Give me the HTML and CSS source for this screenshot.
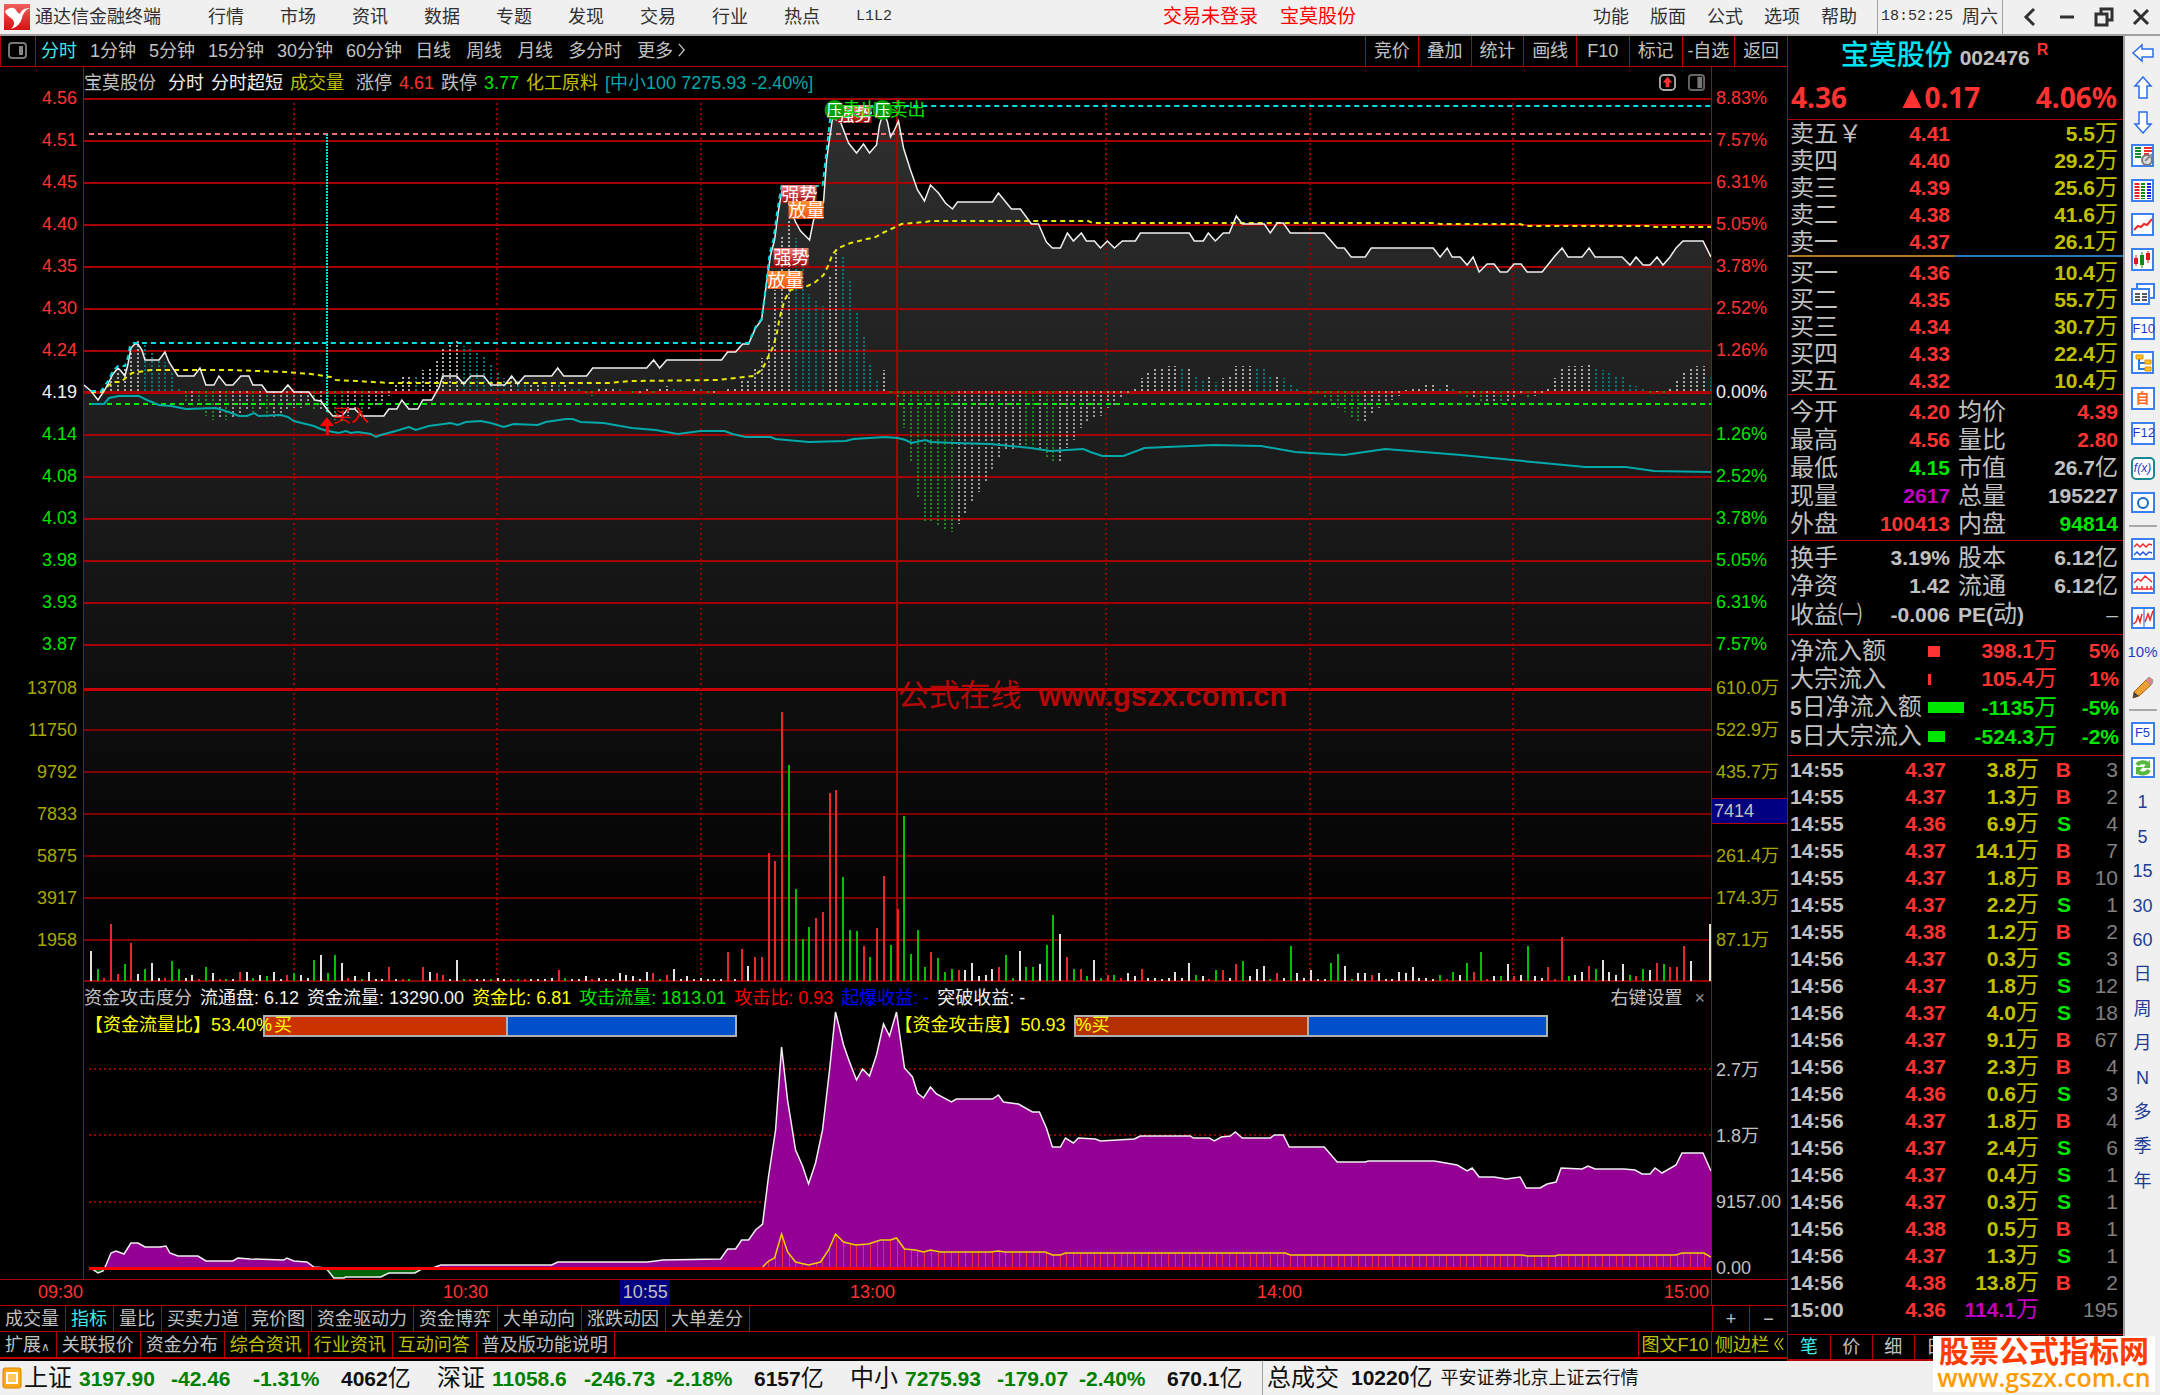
FILE: index.html
```html
<!DOCTYPE html>
<html lang="zh-CN">
<head>
<meta charset="utf-8">
<title>通达信金融终端</title>
<link rel="stylesheet" href="styles.css">
</head>
<body>
<div class="app">
<header class="menubar">
  <svg class="logo" viewBox="0 0 26 26" aria-hidden="true"><defs><linearGradient id="lg" x1="0" y1="0" x2="0" y2="1"><stop offset="0" stop-color="#f0605a"/><stop offset="1" stop-color="#d80f14"/></linearGradient></defs><rect width="26" height="26" fill="url(#lg)"/><path d="M1 7C5 3 11 2 13 8l3 2c1-4 5-6 10-6-5 2-7 6-8 10s-4 9-11 11c3-3 4-6 2-9S2 12 1 7Z" fill="#fff"/></svg>
  <span class="appname">通达信金融终端</span>
  <nav class="menu"><button>行情</button><button>市场</button><button>资讯</button><button>数据</button><button>专题</button><button>发现</button><button>交易</button><button>行业</button><button>热点</button><button class="mono">L1L2</button></nav>
  <div class="login"><a href="#">交易未登录</a><a href="#">宝莫股份</a></div>
  <nav class="tools"><button>功能</button><button>版面</button><button>公式</button><button>选项</button><button>帮助</button></nav>
  <div class="clock"><span class="mono">18:52:25</span><span>周六</span></div>
  <div class="winbtns">
    <button aria-label="收起"><svg viewBox="0 0 20 20"><path d="M14 2 6 10l8 8" stroke-width="3"/></svg></button>
    <button aria-label="最小化"><svg viewBox="0 0 20 20"><path d="M3 10h14" stroke-width="3"/></svg></button>
    <button aria-label="还原"><svg viewBox="0 0 20 20"><path d="M7 6V2h11v11h-4M2 7h11v11H2z" stroke-width="3"/></svg></button>
    <button aria-label="关闭"><svg viewBox="0 0 20 20"><path d="m3 3 14 14M17 3 3 17" stroke-width="3"/></svg></button>
  </div>
</header>

<div class="workspace">
<main class="main">
  <div class="toolbar">
    <button class="pane" aria-label="侧栏"><svg viewBox="0 0 20 18"><rect x="1" y="1" width="17" height="15" rx="3" fill="none" stroke="#777" stroke-width="2"/><path d="M11 4h4v9h-4z" fill="#888"/></svg></button>
    <div class="periods"><button class="on">分时</button><button>1分钟</button><button>5分钟</button><button>15分钟</button><button>30分钟</button><button>60分钟</button></div>
    <div class="periods long"><button>日线</button><button>周线</button><button>月线</button><button>多分时</button><button>更多 <svg class="chev" viewBox="0 0 8 16"><path d="m1 1 6 7-6 7" fill="none" stroke="#c0c0c0" stroke-width="1.5"/></svg></button></div>
    <div class="actions"><button>竞价</button><button>叠加</button><button>统计</button><button>画线</button><button>F10</button><button>标记</button><button>-自选</button><button>返回</button></div>
  </div>

  <div class="charts">
    <ul class="axis left">
      <li>4.56</li><li>4.51</li><li>4.45</li><li>4.40</li><li>4.35</li><li>4.30</li><li>4.24</li><li class="zero">4.19</li><li class="dn">4.14</li><li class="dn">4.08</li><li class="dn">4.03</li><li class="dn">3.98</li><li class="dn">3.93</li><li class="dn">3.87</li>
      <li class="vol first">13708</li><li class="vol">11750</li><li class="vol">9792</li><li class="vol">7833</li><li class="vol">5875</li><li class="vol">3917</li><li class="vol">1958</li>
    </ul>
    <div class="plots">
      <div class="title">
        <span>宝莫股份</span><span class="w gap">分时</span><span class="w">分时超短</span><span class="y">成交量</span><span class="gap">涨停</span><span class="r">4.61</span><span>跌停</span><span class="g">3.77</span><span class="y">化工原料</span><span class="c">[中小100 7275.93 -2.40%]</span>
        <span class="icons">
          <svg viewBox="0 0 18 18"><rect x="1" y="1" width="16" height="16" rx="4" fill="none" stroke="#aaa" stroke-width="2"/><path d="m9 3 5 6h-3v5H7V9H4z" fill="#ff3232"/></svg>
          <svg viewBox="0 0 18 18"><rect x="1" y="1" width="16" height="16" rx="3" fill="none" stroke="#666" stroke-width="2"/><path d="M10 3h5v12h-5z" fill="#777"/></svg>
        </span>
      </div>
      <svg class="price" id="price" role="img" aria-label="分时走势与成交量"></svg>
      <div class="title sub">
        <span>资金攻击度分</span><span class="w">流通盘: 6.12</span><span class="w">资金流量: 13290.00</span><span class="yy">资金比: 6.81</span><span class="gg">攻击流量: 1813.01</span><span class="rr">攻击比: 0.93</span><span class="bb">起爆收益: -</span><span class="w">突破收益: -</span>
        <span class="icons"><button>右键设置</button><button class="x" aria-label="关闭指标">×</button></span>
      </div>
      <svg class="money" id="money" role="img" aria-label="资金攻击度"></svg>
    </div>
    <ul class="axis right">
      <li>8.83%</li><li>7.57%</li><li>6.31%</li><li>5.05%</li><li>3.78%</li><li>2.52%</li><li>1.26%</li><li class="zero">0.00%</li><li class="dn">1.26%</li><li class="dn">2.52%</li><li class="dn">3.78%</li><li class="dn">5.05%</li><li class="dn">6.31%</li><li class="dn">7.57%</li>
      <li class="vol first">610.0万</li><li class="vol">522.9万</li><li class="vol">435.7万</li><li class="cursor"><span>7414</span></li><li class="vol">261.4万</li><li class="vol">174.3万</li><li class="vol">87.1万</li>
      <li class="m head">2.7万</li><li class="m">1.8万</li><li class="m">9157.00</li><li class="m">0.00</li>
    </ul>
  </div>

  <div class="timeaxis">
    <span>09:30</span>
    <div class="hours"><span>10:30</span><span>13:00</span><span>14:00</span><span>15:00</span><span class="now">10:55</span></div>
    <i></i>
  </div>
  <div class="tabs">
    <button>成交量</button><button class="on">指标</button><button>量比</button><button>买卖力道</button><button>竞价图</button><button>资金驱动力</button><button>资金博弈</button><button>大单动向</button><button>涨跌动因</button><button>大单差分</button>
    <div class="ends"><button>+</button><button>−</button></div>
  </div>
  <div class="tabs second">
    <button>扩展<span class="caret">∧</span></button><button>关联报价</button><button>资金分布</button><button class="y">综合资讯</button><button class="y">行业资讯</button><button class="y">互动问答</button><button>普及版功能说明</button>
    <div class="ends text"><button class="y">图文F10</button><button class="y">侧边栏 <svg class="chev2" viewBox="0 0 12 16"><path d="m6 1-5 7 5 7M11 1 6 8l5 7" fill="none" stroke="#c0c000" stroke-width="1.5"/></svg></button></div>
  </div>
</main>

<aside class="quote">
  <div class="stock"><h1>宝莫股份</h1><span class="code">002476</span><sup>R</sup></div>
  <div class="last"><span>4.36</span><span><svg viewBox="0 0 20 20"><path d="M10 0 20 20H0z" fill="#ff3232"/></svg>0.17</span><span>4.06%</span></div>
  <table class="book">
    <tr><th>卖五￥</th><td>4.41</td><td>5.5<u>万</u></td></tr>
    <tr><th>卖四</th><td>4.40</td><td>29.2<u>万</u></td></tr>
    <tr><th>卖三</th><td>4.39</td><td>25.6<u>万</u></td></tr>
    <tr><th>卖二</th><td>4.38</td><td>41.6<u>万</u></td></tr>
    <tr><th>卖一</th><td>4.37</td><td>26.1<u>万</u></td></tr>
  </table>
  <div class="balance"></div>
  <table class="book buy">
    <tr><th>买一</th><td>4.36</td><td>10.4<u>万</u></td></tr>
    <tr><th>买二</th><td>4.35</td><td>55.7<u>万</u></td></tr>
    <tr><th>买三</th><td>4.34</td><td>30.7<u>万</u></td></tr>
    <tr><th>买四</th><td>4.33</td><td>22.4<u>万</u></td></tr>
    <tr><th>买五</th><td>4.32</td><td>10.4<u>万</u></td></tr>
  </table>
  <div class="box"><table class="stats">
    <tr><th>今开</th><td class="r">4.20</td><th>均价</th><td class="r">4.39</td></tr>
    <tr><th>最高</th><td class="r">4.56</td><th>量比</th><td class="r">2.80</td></tr>
    <tr><th>最低</th><td class="g">4.15</td><th>市值</th><td>26.7<u>亿</u></td></tr>
    <tr><th>现量</th><td class="p">2617</td><th>总量</th><td>195227</td></tr>
    <tr><th>外盘</th><td class="r">100413</td><th>内盘</th><td class="g">94814</td></tr>
  </table></div>
  <div class="box mid"><table class="stats">
    <tr><th>换手</th><td>3.19%</td><th>股本</th><td>6.12<u>亿</u></td></tr>
    <tr><th>净资</th><td>1.42</td><th>流通</th><td>6.12<u>亿</u></td></tr>
    <tr><th>收益㈠</th><td>-0.006</td><th><b>PE(</b>动<b>)</b></th><td class="dash">–</td></tr>
  </table></div>
  <div class="box flows"><table class="flow">
    <tr><th>净流入额</th><td><i style="width:12px"></i></td><td>398.1<u>万</u></td><td>5%</td></tr>
    <tr><th>大宗流入</th><td><i style="width:3px"></i></td><td>105.4<u>万</u></td><td>1%</td></tr>
    <tr class="out"><th><b>5</b>日净流入额</th><td><i style="width:36px"></i></td><td>-1135<u>万</u></td><td>-5%</td></tr>
    <tr class="out"><th><b>5</b>日大宗流入</th><td><i style="width:17px"></i></td><td>-524.3<u>万</u></td><td>-2%</td></tr>
  </table></div>
  <div class="box deals"><table class="ticks">
    <tr><td>14:55</td><td>4.37</td><td>3.8<u>万</u></td><td>B</td><td>3</td></tr>
    <tr><td>14:55</td><td>4.37</td><td>1.3<u>万</u></td><td>B</td><td>2</td></tr>
    <tr><td>14:55</td><td>4.36</td><td>6.9<u>万</u></td><td class="s">S</td><td>4</td></tr>
    <tr><td>14:55</td><td>4.37</td><td>14.1<u>万</u></td><td>B</td><td>7</td></tr>
    <tr><td>14:55</td><td>4.37</td><td>1.8<u>万</u></td><td>B</td><td>10</td></tr>
    <tr><td>14:55</td><td>4.37</td><td>2.2<u>万</u></td><td class="s">S</td><td>1</td></tr>
    <tr><td>14:55</td><td>4.38</td><td>1.2<u>万</u></td><td>B</td><td>2</td></tr>
    <tr><td>14:56</td><td>4.37</td><td>0.3<u>万</u></td><td class="s">S</td><td>3</td></tr>
    <tr><td>14:56</td><td>4.37</td><td>1.8<u>万</u></td><td class="s">S</td><td>12</td></tr>
    <tr><td>14:56</td><td>4.37</td><td>4.0<u>万</u></td><td class="s">S</td><td>18</td></tr>
    <tr><td>14:56</td><td>4.37</td><td>9.1<u>万</u></td><td>B</td><td>67</td></tr>
    <tr><td>14:56</td><td>4.37</td><td>2.3<u>万</u></td><td>B</td><td>4</td></tr>
    <tr><td>14:56</td><td>4.36</td><td>0.6<u>万</u></td><td class="s">S</td><td>3</td></tr>
    <tr><td>14:56</td><td>4.37</td><td>1.8<u>万</u></td><td>B</td><td>4</td></tr>
    <tr><td>14:56</td><td>4.37</td><td>2.4<u>万</u></td><td class="s">S</td><td>6</td></tr>
    <tr><td>14:56</td><td>4.37</td><td>0.4<u>万</u></td><td class="s">S</td><td>1</td></tr>
    <tr><td>14:56</td><td>4.37</td><td>0.3<u>万</u></td><td class="s">S</td><td>1</td></tr>
    <tr><td>14:56</td><td>4.38</td><td>0.5<u>万</u></td><td>B</td><td>1</td></tr>
    <tr><td>14:56</td><td>4.37</td><td>1.3<u>万</u></td><td class="s">S</td><td>1</td></tr>
    <tr><td>14:56</td><td>4.38</td><td>13.8<u>万</u></td><td>B</td><td>2</td></tr>
    <tr class="close"><td>15:00</td><td>4.36</td><td>114.1<u>万</u></td><td></td><td>195</td></tr>
  </table></div>
  <nav class="qtabs"><button class="on">笔</button><button>价</button><button>细</button><button>日</button><button></button><button></button><button></button><button></button></nav>
</aside>

<nav class="rail">
  <div class="railitems">
  <button aria-label="后退"><svg viewBox="0 0 24 24"><path d="M2 12 11 4v4h11v8H11v4z" class="arrow"/></svg></button>
  <button aria-label="上"><svg viewBox="0 0 24 24"><path d="m12 1 8 9h-4v12H8V10H4z" class="arrow"/></svg></button>
  <button aria-label="下"><svg viewBox="0 0 24 24"><path d="m12 23 8-9h-4V2H8v12H4z" class="arrow"/></svg></button>
  <button aria-label="行情设置"><svg viewBox="0 0 24 24"><path d="M1 1h21v21H1z" class="fr"/><path d="M4 4h6M4 7h6M4 10h6M4 13h6" stroke="#0a8a2a" stroke-width="2"/><path d="M13 4h8M13 7h8M13 10h5" stroke="#f02828" stroke-width="2"/><circle cx="16" cy="16" r="5" fill="#ddd" stroke="#777" stroke-width="2"/><path d="m14 17 7-7" stroke="#888" stroke-width="2"/></svg></button>
  <button aria-label="报价"><svg viewBox="0 0 24 24"><path d="M1 1h21v21H1z" class="fr"/><path d="M6 4v16" stroke="#f02020" stroke-width="5" stroke-dasharray="2 1"/><path d="M12 4v16" stroke="#118a11" stroke-width="4" stroke-dasharray="2 1"/><path d="M18 4v16" stroke="#2020e0" stroke-width="4" stroke-dasharray="2 1"/></svg></button>
  <button aria-label="分时图"><svg viewBox="0 0 24 24"><path d="M1 1h21v21H1z" class="fr"/><path d="m3 17 4-4 3 1 3-3 3 1 5-6" class="rd"/></svg></button>
  <button aria-label="K线"><svg viewBox="0 0 24 24"><path d="M1 1h21v21H1z" class="fr"/><path d="M5 7v11M17 3v12" stroke="#e01818"/><path d="M3 10h4v6H3zM15 5h4v7h-4z" fill="#e01818"/><path d="M11 4v16" stroke="#118a11"/><path d="M9 7h4v10H9z" fill="#118a11"/></svg></button>
  <button aria-label="窗口"><svg viewBox="0 0 24 24"><path d="M6 2h17v14H6z" class="fr"/><path d="M1 7h17v15H1z" class="fr"/><path d="M4 12h5M11 12h5M4 15h5M11 15h5M4 18h5M11 18h5" stroke="#555" stroke-width="2"/></svg></button>
  <button class="key">F10</button>
  <button aria-label="树"><svg viewBox="0 0 24 24"><path d="M1 1h21v21H1z" class="fr"/><path d="M8 7v11h6M8 12h6" stroke="#2a7ae0" stroke-width="2" fill="none"/><path d="M5 4h7v4H5zM14 9h6v4h-6zM14 16h6v4h-6z" fill="#ffc020" stroke="#e09000"/></svg></button>
  <button class="key self">自</button>
  <button class="key">F12</button>
  <button class="key fx">f(x)</button>
  <button aria-label="圆"><svg viewBox="0 0 24 24"><path d="M1 2h22v19H1z" class="fr"/><circle cx="12" cy="12" r="5" fill="none" stroke="#1468c8" stroke-width="2"/></svg></button>
  <hr>
  <button aria-label="双线"><svg viewBox="0 0 24 24"><path d="M1 2h22v20H1z" class="fr"/><path d="m3 10 3-3 3 3 3-3 3 3 3-3 3 1" fill="none" stroke="#f02828" stroke-width="1.5"/><path d="m3 18 3-3 3 3 3-3 3 3 3-3 3 1" fill="none" stroke="#2a50e0" stroke-width="1.5"/></svg></button>
  <button aria-label="区间"><svg viewBox="0 0 24 24"><path d="M1 2h22v20H1z" class="fr"/><path d="m3 12 4-4 3 2 4-5 7 6M2 18h20M6 18v-3M11 18v-3M16 18v-3M20 18v-3" fill="none" stroke="#f02828" stroke-width="1.5"/></svg></button>
  <button aria-label="波动"><svg viewBox="0 0 24 24"><path d="M1 2h22v20H1z" class="fr"/><path d="m2 18 3-2 2-6 2 6 2-8M14 16l3-8 2 6 3-9" fill="none" stroke="#f02828" stroke-width="1.5"/><path d="M13 3v18" stroke="#2a50e0"/></svg></button>
  <button class="pct">10%</button>
  <button aria-label="画笔"><svg viewBox="0 0 24 24"><path d="m3 17 13-13 5 5L8 21l-6 2z" fill="#f0a030" stroke="#a86010"/><path d="m15 5 3-3 4 3-1 4-2 1z" fill="#e88080" stroke="#999"/><path d="m3 17 5 4-6 2z" fill="#444"/></svg></button>
  <hr>
  <button class="key">F5</button>
  <button aria-label="刷新"><svg viewBox="0 0 24 24"><path d="M1 2h22v19H1z" class="fr"/><path d="M6 9a7 6 0 0 1 11-1M18 14a7 6 0 0 1-11 2" fill="none" stroke="#58b840" stroke-width="4"/><path d="M19 4v8h-7zM5 19v-8h7z" fill="#58b840"/></svg></button>
  <button>1</button><button>5</button><button>15</button><button>30</button><button>60</button><button>日</button><button>周</button><button>月</button><button>N</button><button>多</button><button>季</button><button>年</button>
  </div>
</nav>
</div>

<footer class="status">
  <svg class="sicon" viewBox="0 0 20 22"><rect x="1" y="1" width="18" height="20" rx="2" fill="#ffa818" stroke="#d88000"/><rect x="5" y="6" width="10" height="10" fill="#ffc860" stroke="#fff" stroke-width="2"/></svg>
  <div class="index"><span>上证</span><b>3197.90</b><b>-42.46</b><b>-1.31%</b><strong>4062<u>亿</u></strong></div>
  <div class="index"><span>深证</span><b>11058.6</b><b>-246.73</b><b>-2.18%</b><strong>6157<u>亿</u></strong></div>
  <div class="index"><span>中小</span><b>7275.93</b><b>-179.07</b><b>-2.40%</b><strong>670.1<u>亿</u></strong></div>
  <div class="total"><span>总成交</span><strong>10220<u>亿</u></strong></div>
  <div class="server">平安证券北京上证云行情</div>
</footer>
<a class="site" href="#"><strong>股票公式指标网</strong><span>www.gszx.com.cn</span></a>
</div>
<script src="chart.js"></script>
</body>
</html>
```
FILE: styles.css
```css
* { box-sizing: border-box; }
body { margin: 0; background: #000; color: #c0c0c0; font: 18px/24px "Liberation Sans", "Noto Sans CJK SC", sans-serif; }
button { margin: 0; padding: 0; border: 0; background: none; color: inherit; font: inherit; white-space: nowrap; cursor: pointer; }
a { color: inherit; text-decoration: none; }
ul { margin: 0; padding: 0; list-style: none; }
u { text-decoration: none; font-weight: 400; font-size: 23px; line-height: 1; }
table { width: 100%; border-collapse: collapse; table-layout: fixed; }
th, td { padding: 0; white-space: nowrap; }
.app { position: relative; min-width: 1500px; }
.mono { font-family: "Liberation Mono", monospace; font-size: 15px; }
.r { color: #ff3232; }
.g { color: #00e600; }
.y { color: #c0c000; }
.c { color: #00a8a8; }
.w { color: #f0f0f0; }
.p { color: #c000c0; }
.yy { color: #ffff00; }
.gg { color: #00e600; }
.rr { color: #ff0000; }
.bb { color: #0000ff; }

/* menu bar */
.menubar { display: flex; align-items: center; height: 36px; padding-left: 4px; background: #f0f0f0; color: #303030; border-bottom: 2px solid #a0a0a0; }
.logo { width: 26px; height: 26px; }
.appname { margin-left: 5px; }
.menu { display: flex; gap: 36px; margin-left: 47px; }
.login { flex: 1; display: flex; justify-content: center; gap: 22px; color: #ff0000; font-size: 19px; padding-left: 34px; }
.tools { display: flex; gap: 21px; margin-right: 20px; }
.clock { display: flex; align-items: center; gap: 9px; height: 34px; padding: 0 4px 0 3px; border-left: 1px solid #a0a0a0; border-right: 1px solid #a0a0a0; }
.winbtns { display: flex; gap: 17px; margin: 0 9px 0 17px; }
.winbtns svg { display: block; width: 20px; height: 20px; fill: none; stroke: #303030; }

.workspace { display: grid; grid-template-columns: 1fr 336px 37px; }
.main { min-width: 0; }

/* period toolbar */
.toolbar { display: flex; align-items: stretch; height: 31px; border-bottom: 1px solid #b40000; }
.pane { width: 36px; border-left: 1px solid #b40000; border-right: 1px solid #b40000; display: grid; place-items: center; }
.pane svg { width: 20px; height: 18px; }
.periods { display: flex; gap: 13px; margin-left: 5px; }
.long { gap: 15px; margin-left: 13px; }
.on { color: #40e8e8; }
.chev { width: 7px; height: 14px; }
.chev2 { width: 10px; height: 14px; }
.actions { display: grid; grid-template-columns: repeat(8, 1fr); width: 422px; margin-left: auto; }
.actions button { border-left: 1px solid #b40000; }

/* charts */
.charts { display: grid; grid-template-columns: 83px 1fr 76px; }
.axis { padding-top: 10px; color: #ff3232; }
.axis li { height: 42px; display: flex; align-items: center; }
.axis .zero { color: #f0f0f0; }
.axis .dn { color: #00e600; }
.axis .vol { color: #a8a800; }
.axis .first { margin-top: 2px; }
.left li { justify-content: flex-end; padding-right: 6px; }
.right { border-left: 1px solid #b40000; }
.right li { padding-left: 4px; }
.right .cursor { padding: 0 0 6px; }
.cursor span { flex: 1; height: 26px; padding-left: 2px; background: #000080; border: solid #b40000; border-width: 1px 0; color: #c0c0c0; }
.right .m { align-items: flex-end; height: 66px; color: #c0c0c0; line-height: 20px; }
.right .head { margin-top: 53px; }
.plots { min-width: 0; border-left: 1px solid #b40000; }
.title { display: flex; align-items: center; gap: 7px; height: 31px; overflow: hidden; white-space: nowrap; }
.title .gap { margin-left: 5px; }
.title.sub { gap: 8px; height: 28px; padding-top: 3px; }
.icons { display: flex; gap: 12px; margin-left: auto; margin-right: 6px; }
.icons svg { width: 17px; height: 17px; }
.x { color: #909090; }
.price { display: block; width: 100%; height: 884px; }
.money { display: block; width: 100%; height: 269px; }

/* time axis and tab rows */
.timeaxis { display: grid; grid-template-columns: 83px 1fr 76px; height: 27px; border: solid #b40000; border-width: 1px 0; color: #ff3232; text-align: right; }
.timeaxis i { border-left: 1px solid #b40000; }
.hours { position: relative; display: grid; grid-template-columns: repeat(4, 1fr); }
.hours span { padding-right: 2px; }
.hours .now { position: absolute; left: 33%; top: 0; bottom: 0; width: 50px; padding: 0; background: #000080; color: #c0c0c0; text-align: center; }
.tabs { display: flex; height: 26px; border-bottom: 1px solid #b40000; }
.tabs.second { height: 27px; border-bottom: 2px solid #c00000; }
.tabs > button { padding: 0 6px 0 5px; border-right: 1px solid #b40000; }
.caret { font: 12px/12px "DejaVu Sans", sans-serif; }
.ends { display: grid; grid-template-columns: 37px 38px; margin-left: auto; }
.ends button { border-left: 1px solid #b40000; }
.ends.text { grid-template-columns: 73px 76px; }

/* quote panel */
.quote { border-left: 1px solid #b40000; }
.stock { display: flex; justify-content: center; align-items: baseline; gap: 7px; height: 40px; padding-right: 22px; }
.stock h1 { margin: 0; color: #00e4f4; font-size: 28px; line-height: 40px; font-weight: 500; }
.code { font-size: 21px; font-weight: 700; }
.stock sup { align-self: flex-start; color: #ff3232; font-size: 16px; font-weight: 700; line-height: 28px; }
.last { display: flex; justify-content: space-between; height: 44px; padding: 0 6px 0 3px; border-bottom: 1px solid #b40000; color: #ff3232; font: 700 28px/42px "Noto Sans", sans-serif; }
.last svg { width: 20px; height: 19px; margin-right: 2px; }
th { color: #c0c0c0; font-size: 24px; font-weight: 400; text-align: left; }
th b { font-size: 21px; }
td { font-size: 21px; font-weight: 700; text-align: right; }
.book td, .book th { height: 27px; line-height: 27px; }
.book { color: #c0c000; }
.book th { width: 100px; padding-left: 2px; }
.book td:nth-child(2) { width: 62px; color: #ff3232; }
.book td:last-child { padding-right: 5px; }
.balance { height: 2px; margin: 0 0 2px; background: linear-gradient(90deg, #b07820 50%, #2878b8 50%); }
.box { padding: 3px 0 2px; border-top: 1px solid #b40000; }
.mid { padding-bottom: 5px; }
.flows { padding: 2px 0 4px; }
.deals { padding: 0 0 11px; }
.stats td, .stats th, .flow td, .flow th { height: 28px; line-height: 28px; }
.stats th { width: 75px; padding-left: 2px; }
.stats td:nth-child(2) { width: 87px; }
.stats th:nth-child(3) { width: 70px; padding-left: 8px; }
.stats td:last-child { padding-right: 5px; }
.stats .dash { padding-right: 20px; font-weight: 400; }
.flow { color: #ff3232; }
.flow .out { color: #00e600; }
.flow th { width: 140px; padding-left: 2px; }
.flow td:nth-child(2) { width: 38px; }
.flow td:nth-child(3) { width: 91px; }
.flow td:last-child { padding-right: 4px; }
.flow i { display: block; height: 11px; background: currentColor; }
.ticks td { height: 27px; line-height: 27px; }
.ticks td:nth-child(1) { width: 70px; padding-left: 2px; text-align: left; }
.ticks td:nth-child(2) { width: 88px; color: #ff3232; }
.ticks td:nth-child(3) { width: 93px; color: #c0c000; }
.ticks td:nth-child(4) { width: 32px; color: #ff3232; }
.ticks .s:nth-child(4) { color: #00e600; }
.ticks td:nth-child(5) { padding-right: 5px; color: #808080; font-weight: 400; }
.ticks .close td:nth-child(3) { color: #c000c0; }
.qtabs { display: grid; grid-template-columns: repeat(8, 1fr); height: 27px; border: solid #b40000; border-width: 1px 0 2px; }
.qtabs button + button { border-left: 1px solid #b40000; }

/* icon rail */
.rail { background: #f0f0f0; border-left: 2px solid #a0a0a0; color: #1c3c94; }
.railitems { display: flex; flex-direction: column; height: 1162px; }
.rail button { flex: 1; display: grid; place-items: center; }
.rail svg { width: 24px; height: 24px; }
.rail hr { width: 28px; height: 2px; margin: 5px auto; border: 0; background: #a8a8a8; }
.arrow { fill: #fff; stroke: #2a6ce8; stroke-width: 1.5; }
.fr { fill: #fff; stroke: #3a80f0; stroke-width: 2; }
.rd { fill: none; stroke: #f02828; stroke-width: 2; }
.rail .key { flex: 0 1 23px; width: 24px; margin: 6px auto; border: 2px solid #3a80f0; background: #fff; color: #1c3cc8; font-size: 13px; line-height: 18px; }
.rail .self { color: #ff6a1a; font-weight: 700; font-size: 14px; }
.rail .fx { border-color: #1a8890; border-radius: 5px; font-size: 12px; font-style: italic; }
.rail .pct { color: #1c3cc8; font-size: 15px; }

/* status bar */
.status { display: flex; height: 36px; align-items: center; padding-left: 2px; background: #f0f0f0; color: #101010; border-bottom: 2px solid #203040; font-size: 24px; line-height: 34px; white-space: nowrap; }
.sicon { width: 20px; height: 22px; margin-right: 2px; }
.index { display: grid; grid-template-columns: 55px 92px 82px 88px 96px; align-items: baseline; }
.status b, .status strong { font-size: 21px; }
.status b { color: #008000; }
.total { display: flex; gap: 12px; margin-left: -1px; padding-left: 4px; border-left: 1px solid #a0a0a0; }
.server { padding-left: 8px; font-size: 18px; }
.site { position: absolute; right: 5px; bottom: 5px; width: 222px; height: 56px; background: #fff; text-align: center; }
.site strong { display: block; color: #ff3c00; font-size: 30px; line-height: 32px; font-weight: 700; }
.site span { display: block; color: #ff9c00; font: 600 25px/18px "Open Sans", sans-serif; }
```
FILE: chart.js
```js
// Both plots share one time scale: 240 minutes drawn from LEFT to RIGHT.
const LEFT = 83, RIGHT = 1711, STEP = (RIGHT - LEFT) / 240;
const NS = 'http://www.w3.org/2000/svg';

const pricePts = '83,385 90,391 97,400 103,391 107,384 112,374 117,368 120,371 124,376 127,364 130,348 134,344 137,344 141,350 144,360 158,360 164,352 168,362 177,376 193,376 199,368 205,385 213,385 218,376 225,385 232,385 240,376 248,376 252,385 261,385 266,392 281,392 287,385 293,392 308,392 314,400 320,401 326,409 332,416 341,416 347,409 354,409 361,416 383,416 388,409 396,409 401,400 408,409 417,409 422,400 431,400 438,388 442,376 456,376 463,384 470,376 483,376 490,385 504,385 511,376 517,384 524,376 551,376 557,368 563,376 586,376 592,368 646,368 653,360 659,368 666,360 721,360 727,352 735,352 742,344 748,344 755,328 761,320 765,290 770,255 774,240 778,210 782,187 787,200 795,222 800,231 809,240 813,220 823,202 826,160 832,118 840,122 843,130 848,143 856,153 863,144 869,153 876,145 879,125 883,112 887,122 890,137 894,130 898,121 903,148 910,170 917,190 921,196 924,201 930,185 938,193 945,203 952,209 957,202 992,202 998,193 1011,209 1020,209 1031,224 1038,224 1046,242 1052,248 1060,248 1067,233 1073,241 1081,233 1086,241 1094,241 1100,248 1107,241 1114,248 1122,241 1135,241 1140,233 1189,233 1194,241 1203,241 1208,233 1215,241 1223,233 1229,233 1236,216 1242,224 1264,224 1270,233 1277,223 1283,223 1290,233 1324,233 1337,248 1344,248 1351,257 1365,257 1371,248 1433,248 1440,257 1447,248 1452,257 1460,257 1467,265 1473,257 1479,272 1487,264 1494,264 1500,272 1507,272 1514,264 1521,264 1527,272 1542,272 1554,257 1562,248 1568,257 1582,257 1589,248 1595,257 1622,257 1630,265 1636,257 1643,265 1650,265 1657,257 1663,265 1670,257 1676,248 1683,241 1703,241 1711,257';
const avgPts = '90,392 100,392 108,385 113,382 120,382 127,376 131,373 150,370 230,370 285,372 310,374 330,377 335,380 355,381 390,383 608,383 631,381 717,380 753,376 762,369 766,360 772,348 776,335 779,318 784,300 790,290 807,286 815,282 823,275 828,265 832,254 838,248 850,243 875,237 882,233 895,227 901,224 925,222 930,221 1088,221 1092,223 1434,223 1440,224 1520,224 1526,226 1650,226 1655,227 1711,227';
const indexPts = '90,404 103,404 108,398 118,396 138,396 146,400 158,405 170,406 185,409 215,408 228,412 238,416 246,416 253,413 258,416 280,415 287,417 293,421 305,424 313,426 320,429 327,431 338,433 345,431 350,433 357,432 370,434 375,437 380,435 395,431 408,427 415,430 428,426 450,423 457,425 465,422 480,421 490,423 503,427 513,424 537,425 545,422 565,419 572,419 580,422 603,423 631,428 655,430 677,434 700,431 724,431 732,434 745,437 770,437 775,439 808,442 845,441 853,439 885,437 897,438 905,440 911,443 925,440 930,442 955,443 990,444 1010,446 1030,448 1050,451 1083,449 1090,452 1102,456 1123,456 1144,448 1213,445 1261,446 1295,452 1344,455 1385,449 1461,455 1543,463 1585,467 1626,467 1654,471 1711,472';
const highPts = '90,391 100,391 107,381 112,371 117,366 124,366 127,357 129,346 133,343 748,343 755,327 761,319 765,289 769,254 773,239 777,209 781,186 822,186 825,160 831,106 1711,106';
const moneyPts = '90,1268 97,1273 102,1271 105,1265 110,1253 115,1251 123,1254 130,1243 137,1243 144,1247 159,1247 165,1246 169,1253 177,1256 197,1256 205,1261 232,1261 237,1258 249,1259 283,1260 286,1258 293,1261 306,1262 313,1267 325,1268 333,1278 343,1278 345,1277 380,1277 388,1273 414,1273 421,1269 432,1268 440,1265 551,1265 557,1262 647,1262 655,1261 662,1260 720,1259 727,1249 735,1249 741,1240 748,1240 755,1230 762,1224 768,1176 775,1130 781,1047 787,1100 795,1150 802,1166 808,1184 815,1163 822,1130 829,1070 835,1012 843,1045 849,1062 856,1080 862,1069 869,1076 876,1055 883,1024 889,1036 896,1012 904,1068 912,1077 917,1093 923,1098 930,1087 936,1094 951,1102 956,1099 992,1099 998,1095 1003,1102 1018,1104 1032,1112 1039,1112 1046,1128 1052,1147 1060,1147 1065,1138 1073,1143 1078,1138 1095,1139 1100,1141 1134,1139 1140,1136 1190,1136 1193,1138 1209,1138 1214,1141 1221,1137 1230,1136 1235,1132 1242,1138 1270,1138 1274,1135 1283,1135 1289,1147 1324,1147 1337,1162 1365,1162 1368,1161 1434,1161 1457,1165 1467,1171 1472,1168 1479,1177 1494,1177 1506,1179 1520,1177 1526,1188 1540,1188 1547,1184 1556,1182 1561,1168 1582,1169 1588,1166 1595,1169 1624,1169 1635,1170 1642,1174 1650,1174 1655,1168 1662,1173 1676,1165 1682,1153 1703,1153 1711,1171';
const forcePts = '762,1267 768,1261 774,1258 781,1234 787,1252 795,1262 808,1265 820,1262 828,1250 835,1234 843,1242 855,1245 868,1244 880,1240 890,1240 896,1238 904,1249 915,1250 923,1252 930,1250 940,1252 990,1252 998,1251 1004,1252 1045,1252 1052,1255 1060,1255 1065,1253 1285,1253 1290,1255 1522,1255 1527,1256 1555,1256 1558,1255 1676,1255 1682,1253 1704,1253 1711,1257';

// Momentum histogram, minute 4 onwards; positive values rise above the zero line.
const momentum = [13,19,23,39,51,46,39,30,29,18,3,-11,-11,-13,-25,-29,-26,-29,-27,-25,-19,-21,-20,-26,-26,-25,-19,-17,-17,-13,-18,-18,-23,-29,-31,-25,-19,-21,-19,-14,-13,-5,6,14,16,15,21,23,30,42,48,51,45,43,40,36,27,19,13,13,11,7,8,8,5,7,6,8,4,2,-2,-5,2,4,4,3,0,-3,-2,2,-3,3,5,4,1,0,3,2,-3,-2,0,2,3,10,12,24,33,67,101,155,171,153,126,97,91,85,114,144,135,110,78,55,28,12,21,-2,-8,-37,-72,-106,-130,-132,-136,-139,-141,-133,-123,-112,-101,-91,-80,-67,-59,-58,-55,-57,-59,-59,-66,-71,-71,-57,-49,-37,-31,-27,-25,-17,-15,-8,-2,4,13,19,22,24,25,25,24,24,16,12,15,9,13,15,25,25,25,24,22,15,15,13,8,3,-1,-2,-3,-7,-12,-17,-21,-26,-31,-31,-24,-17,-12,-9,-5,1,3,4,6,7,3,6,2,-2,-7,-6,-12,-11,-11,-13,-12,-7,-2,-6,-5,-3,4,13,24,25,25,25,28,24,21,18,15,14,7,5,2,-2,-1,-2,3,10,19,24,25,25,13];

// Volume per minute: colour letter and bar height.
const volume = 'w30 g12 r3 r57 r7 g17 r38 w7 g12 w18 w3 r3 g20 g12 w3 w6 r2 g14 w8 r2 g2 w2 r9 w9 g3 w6 g5 w9 w2 r6 g8 w6 w3 g21 w26 g8 g26 w18 r3 w5 g2 w9 w2 w2 r14 w2 r2 g2 w0 r14 w9 r8 r6 w2 w21 g2 r2 w2 w2 g2 w3 w2 r2 g2 r2 w2 w2 w2 w3 r11 g3 w2 w2 w5 r2 w3 w2 w2 w8 w6 w5 w2 w9 r8 g2 r6 w12 w2 w5 w2 w3 w2 w2 w2 r29 w2 r32 w15 r24 r24 r128 r120 r269 g216 g92 g42 g54 r63 r69 r188 r191 g104 g51 g50 r35 g24 r53 r105 g36 r72 g165 g27 g51 g14 r29 g23 g9 g12 r11 w11 w18 w5 w6 w12 r14 g26 g3 w30 g14 g14 w17 g36 g66 w47 r24 g12 r12 g5 w21 g3 r6 g6 r3 w8 w5 r12 w3 w3 w2 w3 w9 w3 w18 g6 w5 r2 g11 r11 w3 r17 g20 w5 w12 w15 g2 r8 w3 g35 w8 w3 w11 w2 w2 g18 g27 w15 g2 w8 w8 r6 w8 w2 w2 w9 w8 w14 w3 w3 w2 g6 r2 g9 w6 g18 r9 g29 r2 w5 g5 w17 r5 w6 g35 w5 w3 r14 r2 r44 g5 w6 w9 r15 g12 w21 w9 w6 w17 g6 r5 g12 w11 r18 g17 r14 r14 r35 w20 w0 w0 w57'.split(' ');
const VOL = { w: '#e0e0e0', g: '#00c000', r: '#e62828' };

function setup(id, top, height) {
  const svg = document.getElementById(id);
  const width = svg.clientWidth;
  const k = width / (RIGHT - LEFT);
  svg.setAttribute('viewBox', `${LEFT} ${top} ${width} ${height}`);
  svg.textContent = '';
  const X = x => LEFT + (x - LEFT) * k;
  const add = (tag, attrs, text) => {
    const el = document.createElementNS(NS, tag);
    for (const a in attrs) el.setAttribute(a, attrs[a]);
    if (text) el.textContent = text;
    svg.appendChild(el);
    return el;
  };
  const map = s => s.split(' ').map(p => { const [x, y] = p.split(',').map(Number); return `${X(x)},${y}`; }).join(' ');
  return {
    X, add, map,
    line: (x1, y1, x2, y2, stroke, w = 2, dash = 'none') => add('line', { x1: X(x1), y1, x2: X(x2), y2, stroke, 'stroke-width': w, 'stroke-dasharray': dash, 'shape-rendering': 'crispEdges' }),
    poly: (pts, stroke, w = 1.5, dash = 'none') => add('polyline', { points: map(pts), fill: 'none', stroke, 'stroke-width': w, 'stroke-dasharray': dash }),
    text: (x, y, s, fill, size = 18, weight = 400) => add('text', { x: X(x), y, fill, 'font-size': size, 'font-weight': weight, style: 'white-space:pre' }, s)
  };
}

function gradient(add, id, from, to) {
  const g = add('linearGradient', { id, x1: 0, y1: 0, x2: 0, y2: 1 });
  g.innerHTML = `<stop offset="0" stop-color="${from}"/><stop offset="1" stop-color="${to}"/>`;
}

function drawPrice() {
  const { X, add, map, line, poly, text } = setup('price', 98, 884);
  const fill = add('linearGradient', { id: 'shade', gradientUnits: 'userSpaceOnUse', x1: 0, y1: 98, x2: 0, y2: 960 });
  fill.innerHTML = '<stop offset="0" stop-color="#303030"/><stop offset="1" stop-color="#000"/>';
  gradient(add, 'hot', '#f08080', '#a00808');
  gradient(add, 'warm', '#ff9030', '#f05018');
  add('polygon', { points: `${X(83)},982 ${map(pricePts)} ${X(1711)},982`, fill: 'url(#shade)' });

  for (let i = 0; i < 14; i++) line(83, 99 + i * 42, 1711, 99 + i * 42, '#a40000');
  for (let i = 0; i < 6; i++) line(83, 730 + i * 42, 1711, 730 + i * 42, '#800000');
  line(83, 392, 1711, 392, '#b00000', 3);
  line(83, 689, 1711, 689, '#c80000', 3);
  line(83, 981, 1711, 981, '#900000');
  [293, 496, 700, 1106, 1310, 1513].forEach(x => line(x, 103, x, 981, '#900000', 2, '2 3'));
  line(896, 98, 896, 981, '#a40000');

  momentum.forEach((v, n) => {
    if (!v) return;
    const prev = n ? momentum[n - 1] : 0;
    const colour = v > 0 ? (v < prev ? '#007878' : '#a8a8a8') : (v < prev ? '#208820' : '#989898');
    const x = LEFT + (n + 4) * STEP;
    line(x, 391, x, 391 - v, colour, 2, '2 2');
  });

  line(88, 134, 1711, 134, '#f07070', 2, '5 4');
  line(88, 404, 1711, 404, '#00f000', 2, '5 4');
  line(326, 134, 326, 412, '#00e0e0', 2, '2 1');
  poly(indexPts, '#00a8a8', 2);
  poly(avgPts, '#e8e800', 2, '5 4');
  poly(pricePts, '#f0f0f0');
  poly(highPts, '#00e0e0', 2, '5 4');

  volume.forEach((v, n) => {
    const h = +v.slice(1);
    const x = LEFT + (n + 1) * STEP;
    if (h) line(Math.min(x, 1710), 981 - h, Math.min(x, 1710), 981, VOL[v[0]], 2);
  });

  const tag = (x, y, s, paint) => {
    add('rect', { x: X(x), y, width: 35, height: 18, fill: `url(#${paint})` });
    text(x, y + 16, s, '#fff');
  };
  tag(781, 185, '强势', 'hot');
  tag(788, 201, '放量', 'warm');
  tag(773, 248, '强势', 'hot');
  tag(767, 271, '放量', 'warm');
  tag(836, 105, '强势', 'hot');
  text(842, 116, '卖出', '#00e600');
  text(889, 116, '卖出', '#00e600');
  [834, 882].forEach(x => {
    add('circle', { cx: X(x), cy: 110, r: 10, fill: '#00a000' });
    text(x - 8, 116, '压', '#fff', 16);
  });
  text(332, 422, '买入', '#ff0000');
  add('path', { d: `M${X(326)} 417l7 9h-5v9h-3v-9h-6z`, fill: '#ff0000' });

  text(897, 706, '公式在线', '#b40808', 31);
  text(1038, 706, 'www.gszx.com.cn', '#b40808', 29, 700);
}

function drawMoney() {
  const { X, add, map, line, poly, text } = setup('money', 1010, 269);
  const base = 1268;
  [1069, 1135, 1202].forEach(y => line(88, y, 1711, y, '#900000', 2, '2 3'));
  const area = `${X(90)},${base} ${map(moneyPts)} ${X(1711)},${base}`;
  add('clipPath', { id: 'above' }).innerHTML = `<rect x="0" y="1000" width="9999" height="268"/>`;
  add('clipPath', { id: 'below' }).innerHTML = `<rect x="0" y="1268" width="9999" height="20"/>`;
  add('polygon', { points: area, fill: '#940094', 'clip-path': 'url(#above)' });
  add('polygon', { points: area, fill: '#006400', 'clip-path': 'url(#below)' });
  poly(moneyPts, '#f0f0f0');

  const pts = forcePts.split(' ').map(p => p.split(',').map(Number));
  for (let i = 101; i < 240; i++) {
    const x = LEFT + i * STEP;
    const n = pts.findIndex(p => p[0] >= x);
    const a = pts[Math.max(n - 1, 0)], b = pts[n];
    const y = b[0] === a[0] ? b[1] : a[1] + (b[1] - a[1]) * (x - a[0]) / (b[0] - a[0]);
    line(x, y, x, base, '#f02840', 1);
  }
  poly(forcePts, '#f0d000');
  line(88, base, 1711, base, '#ff0000', 3);

  const gauge = (x, split, w, warm) => {
    const sx = X(x);
    add('rect', { x: sx, y: 1016, width: split, height: 20, fill: warm });
    add('rect', { x: sx + split, y: 1016, width: w - split, height: 20, fill: '#0050cc' });
    add('path', { d: `M${sx} 1016h${w}v20h-${w}zM${sx + split} 1016v20`, fill: 'none', stroke: '#b0b0b0', 'stroke-width': 2, 'shape-rendering': 'crispEdges' });
  };
  gauge(263, 243, 472, '#cc3200');
  gauge(1075, 233, 472, '#b43000');
  text(84, 1031, '【资金流量比】53.40%', '#ffff00');
  text(273, 1031, '买', '#ffff00');
  text(894, 1031, '【资金攻击度】50.93', '#ffff00');
  text(1075, 1031, '%买', '#ffff00');
}

function draw() { drawPrice(); drawMoney(); }
draw();
window.addEventListener('resize', draw);
```
